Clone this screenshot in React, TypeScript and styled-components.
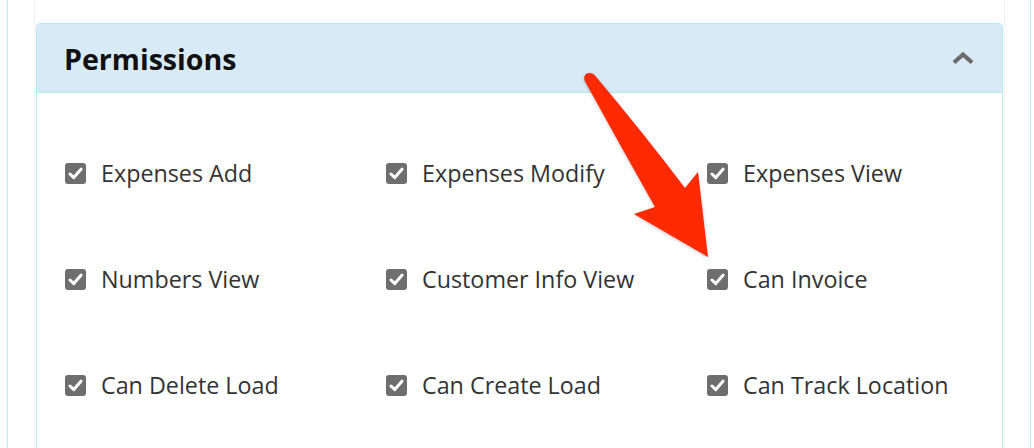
import React from "react";
import styled, { createGlobalStyle } from "styled-components";

const Global = createGlobalStyle`
  *, *::before, *::after { box-sizing: border-box; }
  html, body { margin: 0; padding: 0; background: #fff; }
  body { font-family: "Open Sans", "Liberation Sans", sans-serif; overflow: hidden; }
`;

const Page = styled.div`
  position: relative;
  width: 1034px;
  height: 448px;
  overflow: hidden;
`;

const Outer = styled.div`
  margin-left: 7px;
  width: 1024px;
  height: 100%;
  border-left: 1px solid #bfe9f2;
  border-right: 1px solid #bfe9f2;
  padding: 0 25px 0 26px;
`;

const Inner = styled.div`
  height: 100%;
  border-left: 1px solid #f3f3f3;
  border-right: 1px solid #f3f3f3;
  padding: 23px 1px 0;
`;

const Panel = styled.section`
  border: 1px solid #bce8f1;
  border-radius: 4px 4px 0 0;
  height: 500px;
  background: #fff;
`;

const Header = styled.header`
  display: flex;
  align-items: center;
  justify-content: space-between;
  height: 69px;
  padding: 0 27px 0 27px;
  background: #d9eaf7;
  border-bottom: 1px solid #bce8f1;
  border-radius: 3px 3px 0 0;
`;

const Title = styled.h2`
  margin: 0;
  font-size: 28.6px;
  font-weight: 700;
  color: #111;
`;

const Body = styled.div`
  display: grid;
  grid-template-columns: repeat(3, 321px);
  grid-auto-rows: 106px;
  padding: 27px 28px;
`;

const Item = styled.label`
  display: flex;
  align-items: center;
  gap: 15px;
  font-size: 23.3px;
  color: #333;
`;

const Box = styled.span`
  display: inline-flex;
  align-items: center;
  justify-content: center;
  width: 21px;
  height: 21px;
  border-radius: 3px;
  background: #6e6e6e;
  flex: none;
`;

const ArrowSvg = styled.svg`
  position: absolute;
  left: 0;
  top: 0;
  pointer-events: none;
  filter: drop-shadow(0 1px 1.5px rgba(0, 0, 0, 0.25));
`;

const items = [
  "Expenses Add",
  "Expenses Modify",
  "Expenses View",
  "Numbers View",
  "Customer Info View",
  "Can Invoice",
  "Can Delete Load",
  "Can Create Load",
  "Can Track Location",
];

const Check = () => (
  <svg width="15" height="13" viewBox="0 0 15 13">
    <path
      d="M2 7 L5.8 10.6 L13 2.2"
      fill="none"
      stroke="#fff"
      strokeWidth="3"
      strokeLinecap="round"
      strokeLinejoin="round"
    />
  </svg>
);

export default function App() {
  return (
    <Page>
      <Global />
      <Outer>
        <Inner>
          <Panel>
            <Header>
              <Title>Permissions</Title>
              <svg width="24" height="16" viewBox="0 0 24 16">
                <polyline
                  points="3,12.5 12,4.5 21,12.5"
                  fill="none"
                  stroke="#6b6b6b"
                  strokeWidth="4.2"
                />
              </svg>
            </Header>
            <Body>
              {items.map((t) => (
                <Item key={t}>
                  <Box>
                    <Check />
                  </Box>
                  {t}
                </Item>
              ))}
            </Body>
          </Panel>
        </Inner>
      </Outer>
      <ArrowSvg width="1034" height="448" viewBox="0 0 1034 448">
        <path
          d="M584.5 80.5 Q583 74 589 73 Q593 72.5 595 75.5 Q645 135 685 188 L698 172 L708 257 L634 214 L655 207 Q620 145 584.5 80.5 Z"
          fill="#ff2a00"
        />
      </ArrowSvg>
    </Page>
  );
}
